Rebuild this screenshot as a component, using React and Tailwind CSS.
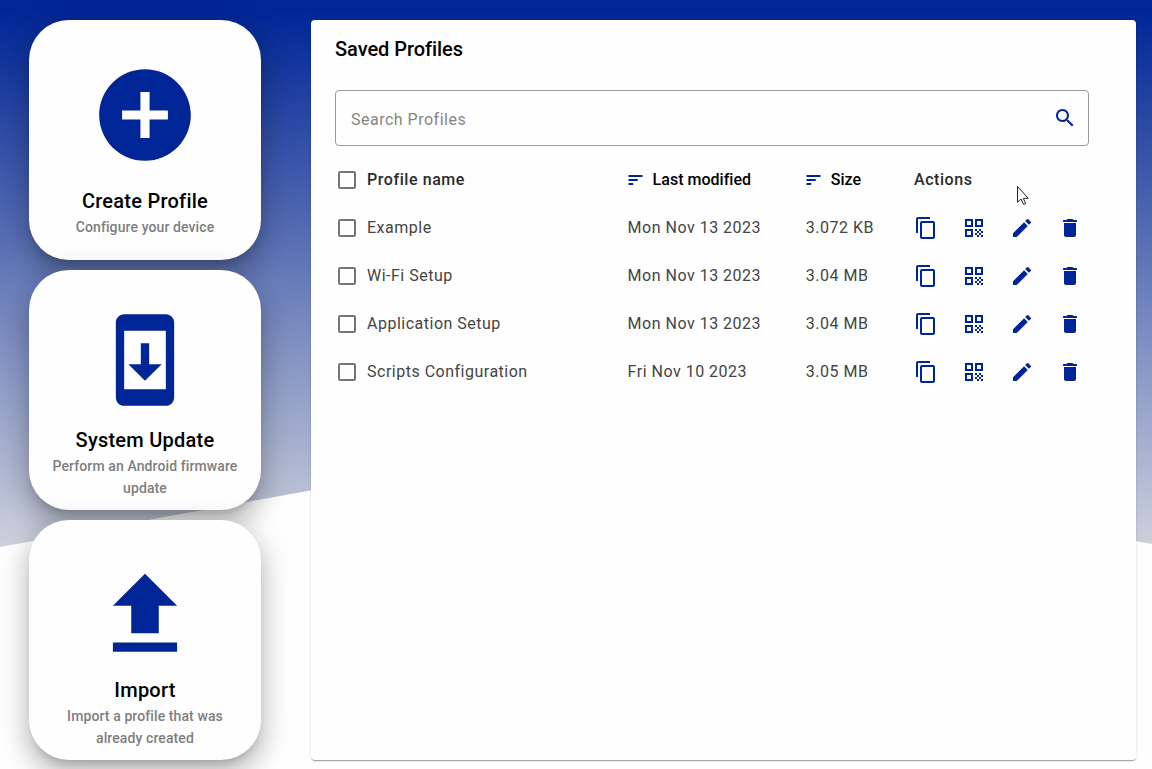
import React from 'react';

const ICONS = {
  plus: 'M12 2C6.48 2 2 6.48 2 12s4.48 10 10 10 10-4.48 10-10S17.52 2 12 2zm5 11h-4v4h-2v-4H7v-2h4V7h2v4h4v2z',
  update:
    'M17 1.01L7 1c-1.1 0-2 .9-2 2v18c0 1.1.9 2 2 2h10c1.1 0 2-.9 2-2V3c0-1.1-.9-1.99-2-1.99zM17 19H7V5h10v14zm-1-6h-3V8h-2v5H8l4 4 4-4z',
  upload: 'M9 16h6v-6h4l-7-7-7 7h4zm-4 2h14v2H5z',
  search:
    'M15.5 14h-.79l-.28-.27C15.41 12.59 16 11.11 16 9.5 16 5.91 13.09 3 9.5 3S3 5.91 3 9.5 5.91 16 9.5 16c1.61 0 3.09-.59 4.23-1.57l.27.28v.79l5 4.99L20.49 19l-4.99-5zm-6 0C7.01 14 5 11.99 5 9.5S7.01 5 9.5 5 14 7.01 14 9.5 11.99 14 9.5 14z',
  copy: 'M16 1H4c-1.1 0-2 .9-2 2v14h2V3h12V1zm3 4H8c-1.1 0-2 .9-2 2v14c0 1.1.9 2 2 2h11c1.1 0 2-.9 2-2V7c0-1.1-.9-2-2-2zm0 16H8V7h11v14z',
  qr: 'M3 11h8V3H3v8zm2-6h4v4H5V5zM3 21h8v-8H3v8zm2-6h4v4H5v-4zM13 3v8h8V3h-8zm6 6h-4V5h4v4zM19 19h2v2h-2zM13 13h2v2h-2zM15 15h2v2h-2zM13 17h2v2h-2zM15 19h2v2h-2zM17 17h2v2h-2zM17 13h2v2h-2zM19 15h2v2h-2z',
  edit: 'M3 17.25V21h3.75L17.81 9.94l-3.75-3.75L3 17.25zM20.71 7.04a1 1 0 0 0 0-1.41l-2.34-2.34a1 1 0 0 0-1.41 0l-1.83 1.83 3.75 3.75 1.83-1.83z',
  trash: 'M6 19c0 1.1.9 2 2 2h8c1.1 0 2-.9 2-2V7H6v12zM19 4h-3.5l-1-1h-5l-1 1H5v2h14V4z',
};

function Icon({ name, className }) {
  return (
    <svg viewBox="0 0 24 24" fill="currentColor" className={`shrink-0 text-[#002596] ${className}`}>
      <path d={ICONS[name]} />
    </svg>
  );
}

function SortIcon() {
  return (
    <svg viewBox="0 0 15 10" className="h-[10px] w-[15px] shrink-0" fill="#002596">
      <path d="M.5 0h14v2H.5zM.5 4h9.200v2H.5zM.5 8h4.700v2H.5z" />
    </svg>
  );
}

function Checkbox() {
  return <span className="ml-[3px] mr-[11px] block size-[18px] shrink-0 rounded-[2px] border-2 border-[#757575]" />;
}

const cards = [
  { icon: 'plus', size: 'size-[110px]', gap: 'mt-[17px]', title: 'Create Profile', text: 'Configure your device' },
  { icon: 'update', size: 'size-[100px]', gap: 'mt-4', title: 'System Update', text: 'Perform an Android firmware update' },
  { icon: 'upload', size: 'size-[110px]', gap: 'mt-[6px]', title: 'Import', text: 'Import a profile that was already created' },
];

const profiles = [
  ['Example', 'Mon Nov 13 2023', '3.072 KB'],
  ['Wi-Fi Setup', 'Mon Nov 13 2023', '3.04 MB'],
  ['Application Setup', 'Mon Nov 13 2023', '3.04 MB'],
  ['Scripts Configuration', 'Fri Nov 10 2023', '3.05 MB'],
];

const row = 'grid h-12 grid-cols-[292.6px_178.2px_108.2px_175px] items-center';

export default function App() {
  return (
    <div className="relative h-[769px] w-[1152px] overflow-hidden bg-[#fefefe] font-[Roboto,sans-serif]">
      <div className="absolute inset-x-0 top-0 h-[547px] bg-[linear-gradient(to_bottom,#002596_10px,#cdd1dc)] [clip-path:polygon(0_0,100%_0,100%_544px,50%_442px,0_547px)]" />
      <div className="relative flex h-full pl-[29px] pr-4 pt-5">
        <nav className="flex w-[232px] shrink-0 flex-col gap-[10px]">
          {cards.map((c) => (
            <button
              key={c.title}
              className="flex h-60 shrink-0 flex-col items-center rounded-[40px] bg-[#fefefe] px-5 pt-10 shadow-[0_8px_10px_-5px_rgba(0,0,0,0.2),0_16px_24px_2px_rgba(0,0,0,0.14),0_6px_30px_5px_rgba(0,0,0,0.12)]"
            >
              <Icon name={c.icon} className={c.size} />
              <span className={`${c.gap} text-[20px] font-medium leading-7 tracking-[0.25px] text-black`}>{c.title}</span>
              <span className="mt-px text-center text-sm font-medium leading-[22px] tracking-[0.1px] text-[#7e7e7e]">
                {c.text}
              </span>
            </button>
          ))}
        </nav>
        <main className="ml-[50px] h-[740px] w-[825px] rounded bg-[#fefefe] px-6 pt-[13px] shadow-[0_2px_1px_-1px_rgba(0,0,0,0.2),0_1px_1px_rgba(0,0,0,0.14),0_1px_3px_rgba(0,0,0,0.12)]">
          <h1 className="text-[20px] font-medium leading-8 tracking-[-0.05px] text-black">Saved Profiles</h1>
          <div className="mt-[25px] flex h-14 w-[754px] items-center justify-between rounded border border-[#9a9a9a] pl-[15px] pr-[11.5px]">
            <span className="pt-[3px] text-base tracking-[0.5px] text-[#858585]">Search Profiles</span>
            <Icon name="search" className="size-6" />
          </div>
          <section className="mt-[10px] text-base tracking-[0.5px] text-[#444]">
            <div className={`${row} font-medium text-[#2a2a2a]`}>
              <div className="flex items-center tracking-[0.57px]">
                <Checkbox />
                Profile name
              </div>
              <div className="flex items-center gap-[10px] tracking-[0.02px] text-black">
                <SortIcon />
                Last modified
              </div>
              <div className="flex items-center gap-[10px] tracking-[0.02px] text-black">
                <SortIcon />
                Size
              </div>
              <div className="tracking-[0.57px]">Actions</div>
            </div>
            {profiles.map(([name, date, size]) => (
              <div key={name} className={row}>
                <div className="flex items-center">
                  <Checkbox />
                  {name}
                </div>
                <div>{date}</div>
                <div>{size}</div>
                <div className="flex gap-6">
                  <Icon name="copy" className="size-6" />
                  <Icon name="qr" className="size-6" />
                  <Icon name="edit" className="size-6" />
                  <Icon name="trash" className="size-6" />
                </div>
              </div>
            ))}
          </section>
        </main>
      </div>
      <svg viewBox="0 0 12 19" className="absolute left-[1017px] top-[186px] h-[19px] w-3">
        <path d="M.5.5v15.800l3.500-3.300 2.500 5.500 2.200-1-2.400-5.200h5z" fill="#fff" stroke="#222" />
      </svg>
    </div>
  );
}
